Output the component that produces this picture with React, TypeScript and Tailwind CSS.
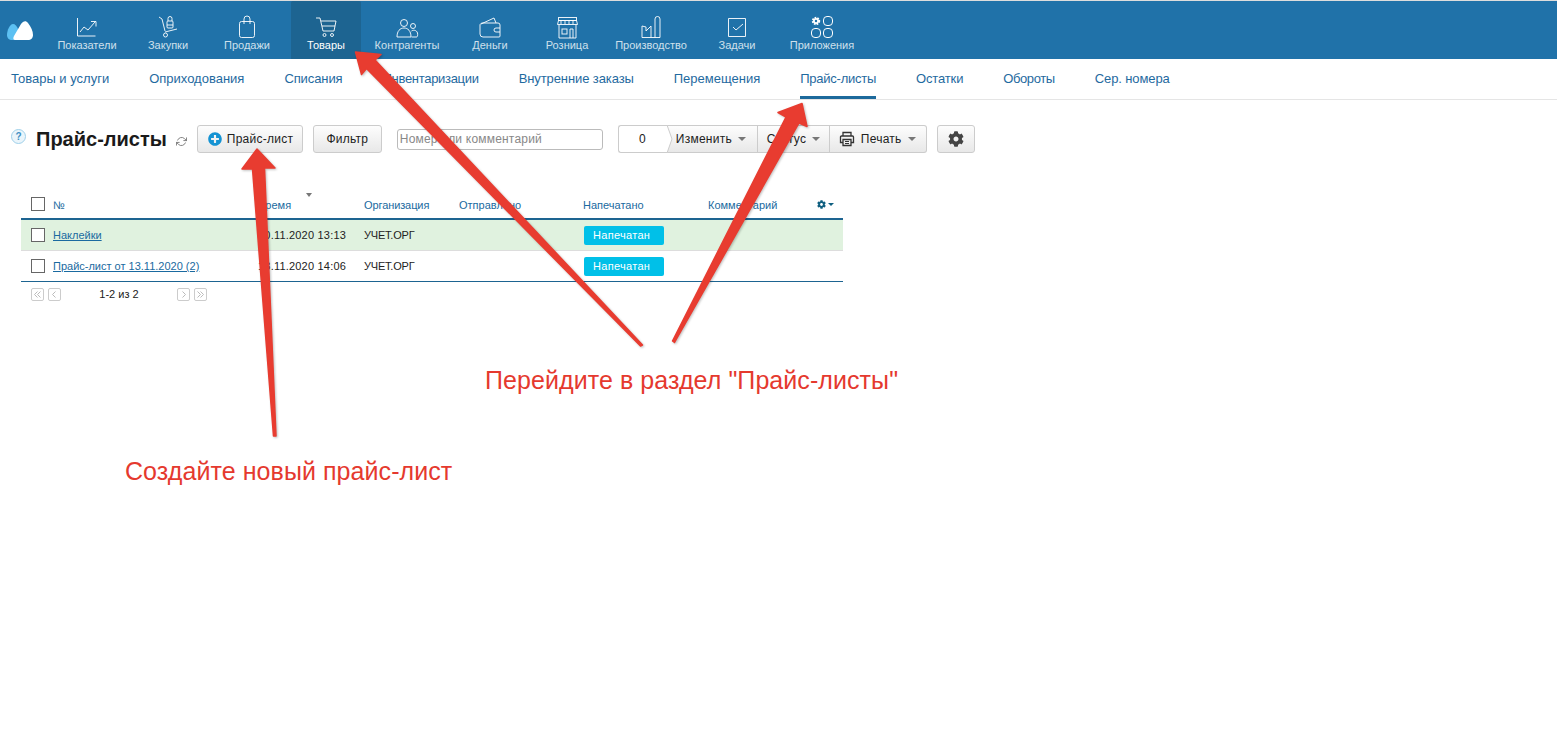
import React from "react";
import { FaCog, FaPlusCircle } from "react-icons/fa";
import { FiRefreshCw } from "react-icons/fi";

const S = ({ children }: { children: React.ReactNode }) => (
  <svg width="24" height="24" viewBox="0 0 24 24" fill="none" stroke="#fff" strokeOpacity="0.9" strokeWidth="1">{children}</svg>
);

const navItems: { label: string; w: string; icon: React.ReactNode; active?: boolean }[] = [
  { label: "Показатели", w: "w-[80px]", icon: <S><path d="M2.500 3v18h18M5 17l4-5 4 3 7-8M16 6.500h5v5" /></S> },
  { label: "Закупки", w: "w-[82px]", icon: <S><path d="M3 2l3 2 3 12M9 17l12-3" /><circle cx="9.500" cy="20" r="2" /><rect x="11" y="6" width="6" height="7" rx="1" /><path d="M12 6V3.500a2 2 0 0 1 4 0V6M11 10h6" /></S> },
  { label: "Продажи", w: "w-[76px]", icon: <S><rect x="4.500" y="6.500" width="15" height="16" rx="2" /><path d="M9 9V4a3 3 0 0 1 6 0v5" /></S> },
  { label: "Товары", w: "w-[70px] ml-[6px]", active: true, icon: <S><path d="M2 3h4l3 13h11l2-10H7" /><path d="M8 11h13" /><circle cx="10.500" cy="20" r="1.500" /><circle cx="18" cy="20" r="1.500" /></S> },
  { label: "Контрагенты", w: "w-[92px]", icon: <S><circle cx="9" cy="8" r="3.500" /><path d="M2 22c0-6 3-9 7-9s7 3 7 9z" /><circle cx="18" cy="11" r="2.500" /><path d="M16.500 16c1-1 5-1.500 6 2 .4 2 0 4-1 4h-5" /></S> },
  { label: "Деньги", w: "w-[74px]", icon: <S><path d="M3 9l13-6 2 5M5 8h15a2 2 0 0 1 2 2v11a1 1 0 0 1-1 1H5a3 3 0 0 1-3-3V10c0-1 1-2 3-2z" /><path d="M22 13h-4a2 2 0 0 0 0 4h4" /></S> },
  { label: "Розница", w: "w-[80px]", icon: <S><rect x="3.500" y="2.500" width="18" height="3" /><path d="M2.500 9.500l1-4h18l1 4zM4 10v13h17V10M6 6v3M10 6v3M14 6v3M18 6v3" /><rect x="7" y="14" width="5" height="5" /><path d="M15 23v-9h3v9" /></S> },
  { label: "Производство", w: "w-[88px]", icon: <S><path d="M3 22.500V11l4 1v4l5-5v11.500M3 22.500h18V4a2.500 2.500 0 0 0-5 0v18.500" /></S> },
  { label: "Задачи", w: "w-[84px]", icon: <S><path d="M3.500 3.500h17v18h-17z" /><path d="M8 12l3 3 7-6" /></S> },
  {
    label: "Приложения", w: "w-[86px]",
    icon: (
      <svg width="24" height="24" viewBox="0 0 24 24" fill="none" stroke="#fff" strokeWidth="1">
        <circle cx="6" cy="6" r="3" fill="#fff" stroke="#fff" strokeWidth="2.400" strokeDasharray="1.500 1" />
        <circle cx="6" cy="6" r="1.200" fill="#2072a9" stroke="none" />
        <rect x="13.500" y="1.500" width="9" height="9" rx="3.500" />
        <rect x="1.500" y="13.500" width="9" height="9" rx="3.500" />
        <rect x="13.500" y="13.500" width="9" height="9" rx="3.500" />
      </svg>
    ),
  },
];

const subItems: { t: string; c: string }[] = [
  { t: "Товары и услуги", c: "" },
  { t: "Оприходования", c: "" },
  { t: "Списания", c: "tracking-[-0.1px]" },
  { t: "Инвентаризации", c: "tracking-[-0.3px]" },
  { t: "Внутренние заказы", c: "tracking-[-0.1px]" },
  { t: "Перемещения", c: "" },
  { t: "Прайс-листы", c: "tracking-[-0.25px]" },
  { t: "Остатки", c: "tracking-[-0.15px]" },
  { t: "Обороты", c: "tracking-[-0.4px]" },
  { t: "Сер. номера", c: "tracking-[-0.1px]" },
];

const btn = "flex items-center border border-[#ccc] rounded-[3px] bg-linear-to-b from-[#fdfdfd] to-[#e8e8e8] h-[28px] text-[12px] tracking-[0.25px] text-[#222]";
const Caret = () => <span className="ml-[6px] w-0 h-0 border-x-[4.500px] border-x-transparent border-t-[4px] border-t-[#777]" />;
const grid = "grid grid-cols-[32px_205px_106px_95px_124px_125px_auto]";

const Box = ({ cls = "" }: { cls?: string }) => <span className={`block w-[14px] h-[14px] border border-[#666] bg-white ml-[10px] ${cls}`} />;
const PageBtn = ({ d, cls = "" }: { d: string; cls?: string }) => (
  <span className={`w-[13px] h-[13px] border border-[#ccc] rounded-[2px] flex items-center justify-center ${cls}`}>
    <svg width="9" height="9" viewBox="0 0 9 9" fill="none" stroke="#bbb" strokeWidth="1"><path d={d} /></svg>
  </span>
);

function Row({ name, date, bg, border }: { name: string; date: string; bg: string; border: string }) {
  return (
    <div className={`${grid} items-center h-[31px] text-[11px] text-[#222] ${bg} border-b ${border}`}>
      <Box />
      <a className="text-[#1a6aa0] underline">{name}</a>
      <span className="tracking-[0.2px]">{date}</span>
      <span className="tracking-[-0.2px]">УЧЕТ.ОРГ</span>
      <span />
      <span className="flex items-center w-[80px] h-[19px] ml-[1px] pl-[9px] bg-[#00c0e8] rounded-[2px] tracking-[0.3px] text-white">Напечатан</span>
      <span />
    </div>
  );
}

export default function App() {
  return (
    <div className="relative min-h-[744px] bg-white font-['Liberation_Sans',Arial,sans-serif] overflow-hidden">
      <header className="flex h-[59px] border-t border-[#ddd] bg-[#2072a9]">
        <div className="w-[47px] pl-[7px] pt-[20px]">
          <svg width="27" height="20" viewBox="0 0 27 20">
            <path d="M5 19C2 19 0 17 0 14 0 9 3 3 6 3c2 0 4 2 5 5l3 11z" fill="#5cc0f2" />
            <path d="M8 19c-2 0-2-2-1-4L14 3c2-3 5-4 7-1 3 4 5 8 5 12 0 3-2 5-5 5z" fill="#fff" />
          </svg>
        </div>
        {navItems.map((n) => (
          <div key={n.label} className={`${n.w} flex flex-col items-center pt-[14px] ${n.active ? "bg-[#1d6491] rounded-t-[2px]" : ""}`}>
            {n.icon}
            <span className={`text-[11px] leading-[13px] whitespace-nowrap ${n.active ? "text-white" : "text-[#cfe0ec]"}`}>{n.label}</span>
          </div>
        ))}
      </header>

      <nav className="flex gap-[40px] h-[41px] pl-[11px] border-b border-[#e5e5e5] text-[13px] text-[#1f6aa0]">
        {subItems.map((s) => (
          <a key={s.t} className={`flex items-center h-[40px] whitespace-nowrap ${s.c} ${s.t === "Прайс-листы" ? "border-b-[3px] border-[#1d6a9c] pt-[3px]" : ""}`}>{s.t}</a>
        ))}
      </nav>

      <div className="flex items-center h-[28px] mt-[25px] ml-[11px]">
        <span className="flex items-center justify-center w-[15px] h-[15px] -mt-[5px] rounded-full border border-[#9fd0ea] bg-[#eaf5fb] text-[10px] font-bold text-[#3d8fc4]">?</span>
        <h1 className="ml-[10px] text-[20px] font-bold text-[#1a1a1a] leading-none whitespace-nowrap">Прайс-листы</h1>
        <FiRefreshCw className="ml-[9px] mt-[4px] w-[11px] h-[11px] text-[#777]" />
        <button className={`${btn} ml-[10px] w-[106px] pl-[10px]`}>
          <FaPlusCircle className="w-[14px] h-[14px] text-[#1593d3]" />
          <span className="ml-[5px]">Прайс-лист</span>
        </button>
        <button className={`${btn} ml-[10px] w-[69px] justify-center`}>Фильтр</button>
        <input
          readOnly
          placeholder="Номер или комментарий"
          className="ml-[15px] w-[206px] h-[21px] px-[2px] border border-[#bbb] rounded-[3px] text-[12px] tracking-[0.2px] placeholder:text-[#888] outline-none"
        />
        <div className="ml-[15px] flex">
          <div className="relative w-[50px] h-[28px] flex items-center justify-center pr-[2px] border border-r-0 border-[#ccc] rounded-l-[3px] bg-white text-[12px] text-[#222]">
            0
            <svg className="absolute -right-[5px] -top-[1px] z-10" width="6" height="28" viewBox="0 0 6 28">
              <path d="M0 0l5 14L0 28" fill="#fff" stroke="#ccc" />
            </svg>
          </div>
          <button className={`${btn} w-[90px] pl-[8px] rounded-none border-l-0`}>Изменить<Caret /></button>
          <button className={`${btn} w-[72px] pl-[9px] rounded-none border-l-0`}>Статус<Caret /></button>
          <button className={`${btn} w-[97px] pl-[9px] rounded-l-none border-l-0`}>
            <svg width="16" height="16" viewBox="0 0 16 16" fill="none" stroke="#333" strokeWidth="1.300">
              <path d="M4 5V1.500h8V5" />
              <path d="M4 11.500H1.500V6a1 1 0 0 1 1-1h11a1 1 0 0 1 1 1v5.500H12" />
              <path d="M4 8.500h8v6H4z" />
              <path d="M6 10.500h4M6 12.500h4" strokeWidth="1" />
            </svg>
            <span className="ml-[6px]">Печать</span>
            <Caret />
          </button>
        </div>
        <button className={`${btn} ml-[10px] w-[38px] justify-center`}>
          <FaCog className="w-[16px] h-[16px] text-[#444]" />
        </button>
      </div>

      <div className="ml-[21px] w-[822px] mt-[37px]">
        <div className={`relative ${grid} items-center h-[30px] pt-[2px] text-[11px] text-[#1a6aa0] border-b-2 border-[#1d6491]`}>
          <Box cls="-mt-[3px]" />
          <span>№</span>
          <span>
            Время
            <span className="absolute left-[285px] top-[3px] w-0 h-0 border-x-[3px] border-x-transparent border-t-[4px] border-t-[#777]" />
          </span>
          <span className="tracking-[-0.1px]">Организация</span>
          <span>Отправлено</span>
          <span>Напечатано</span>
          <span>Комментарий</span>
          <span className="absolute left-[796px] top-[10px] flex items-center text-[#0f5f80]">
            <FaCog className="w-[9px] h-[9px]" />
            <span className="ml-[2px] w-0 h-0 border-x-[3px] border-x-transparent border-t-[3px] border-t-[#0f5f80]" />
          </span>
        </div>
        <Row name="Наклейки" date="10.11.2020 13:13" bg="bg-[#e0f2df]" border="border-[#ddd]" />
        <Row name="Прайс-лист от 13.11.2020 (2)" date="13.11.2020 14:06" bg="bg-white" border="border-[#1d6491]" />
        <div className="flex items-center h-[24px] pl-[10px] text-[11px] text-[#222]">
          <PageBtn d="M4.500 1.500l-3 3 3 3M7.500 1.500l-3 3 3 3" />
          <PageBtn d="M5.500 1.500l-3 3 3 3" cls="ml-[4px]" />
          <span className="w-[116px] text-center">1-2 из 2</span>
          <PageBtn d="M3.500 1.500l3 3-3 3" />
          <PageBtn d="M1.500 1.500l3 3-3 3M4.500 1.500l3 3-3 3" cls="ml-[4px]" />
        </div>
      </div>

      {/* annotation overlay */}
      <svg className="absolute inset-0 pointer-events-none drop-shadow-[1px_1px_1px_rgba(0,0,0,0.25)]" width="1557" height="744" viewBox="0 0 1557 744">
        <g fill="#e83c30" stroke="#e83c30" strokeWidth="1.500" strokeLinejoin="round">
          <path d="M273.500 436L276 436 L264.500 168 L275 168 L257 149 L242 169 L252.500 169 Z" />
          <path d="M640.500 346L642.500 345 L375 60 L381 54.500 L355.500 52 L361.500 74.500 L366.500 68.500 Z" />
          <path d="M672.500 341L674.500 342.500 L799 123 L807 126.500 L802 103.500 L778 112.500 L786 117 Z" />
        </g>
      </svg>
      <span className="absolute left-[485px] top-[365px] text-[25px] leading-[30px] tracking-[0.07px] text-[#e5392e] whitespace-nowrap">Перейдите в раздел "Прайс-листы"</span>
      <span className="absolute left-[125px] top-[456px] text-[25px] leading-[30px] tracking-[0.07px] text-[#e5392e] whitespace-nowrap">Создайте новый прайс-лист</span>
    </div>
  );
}
